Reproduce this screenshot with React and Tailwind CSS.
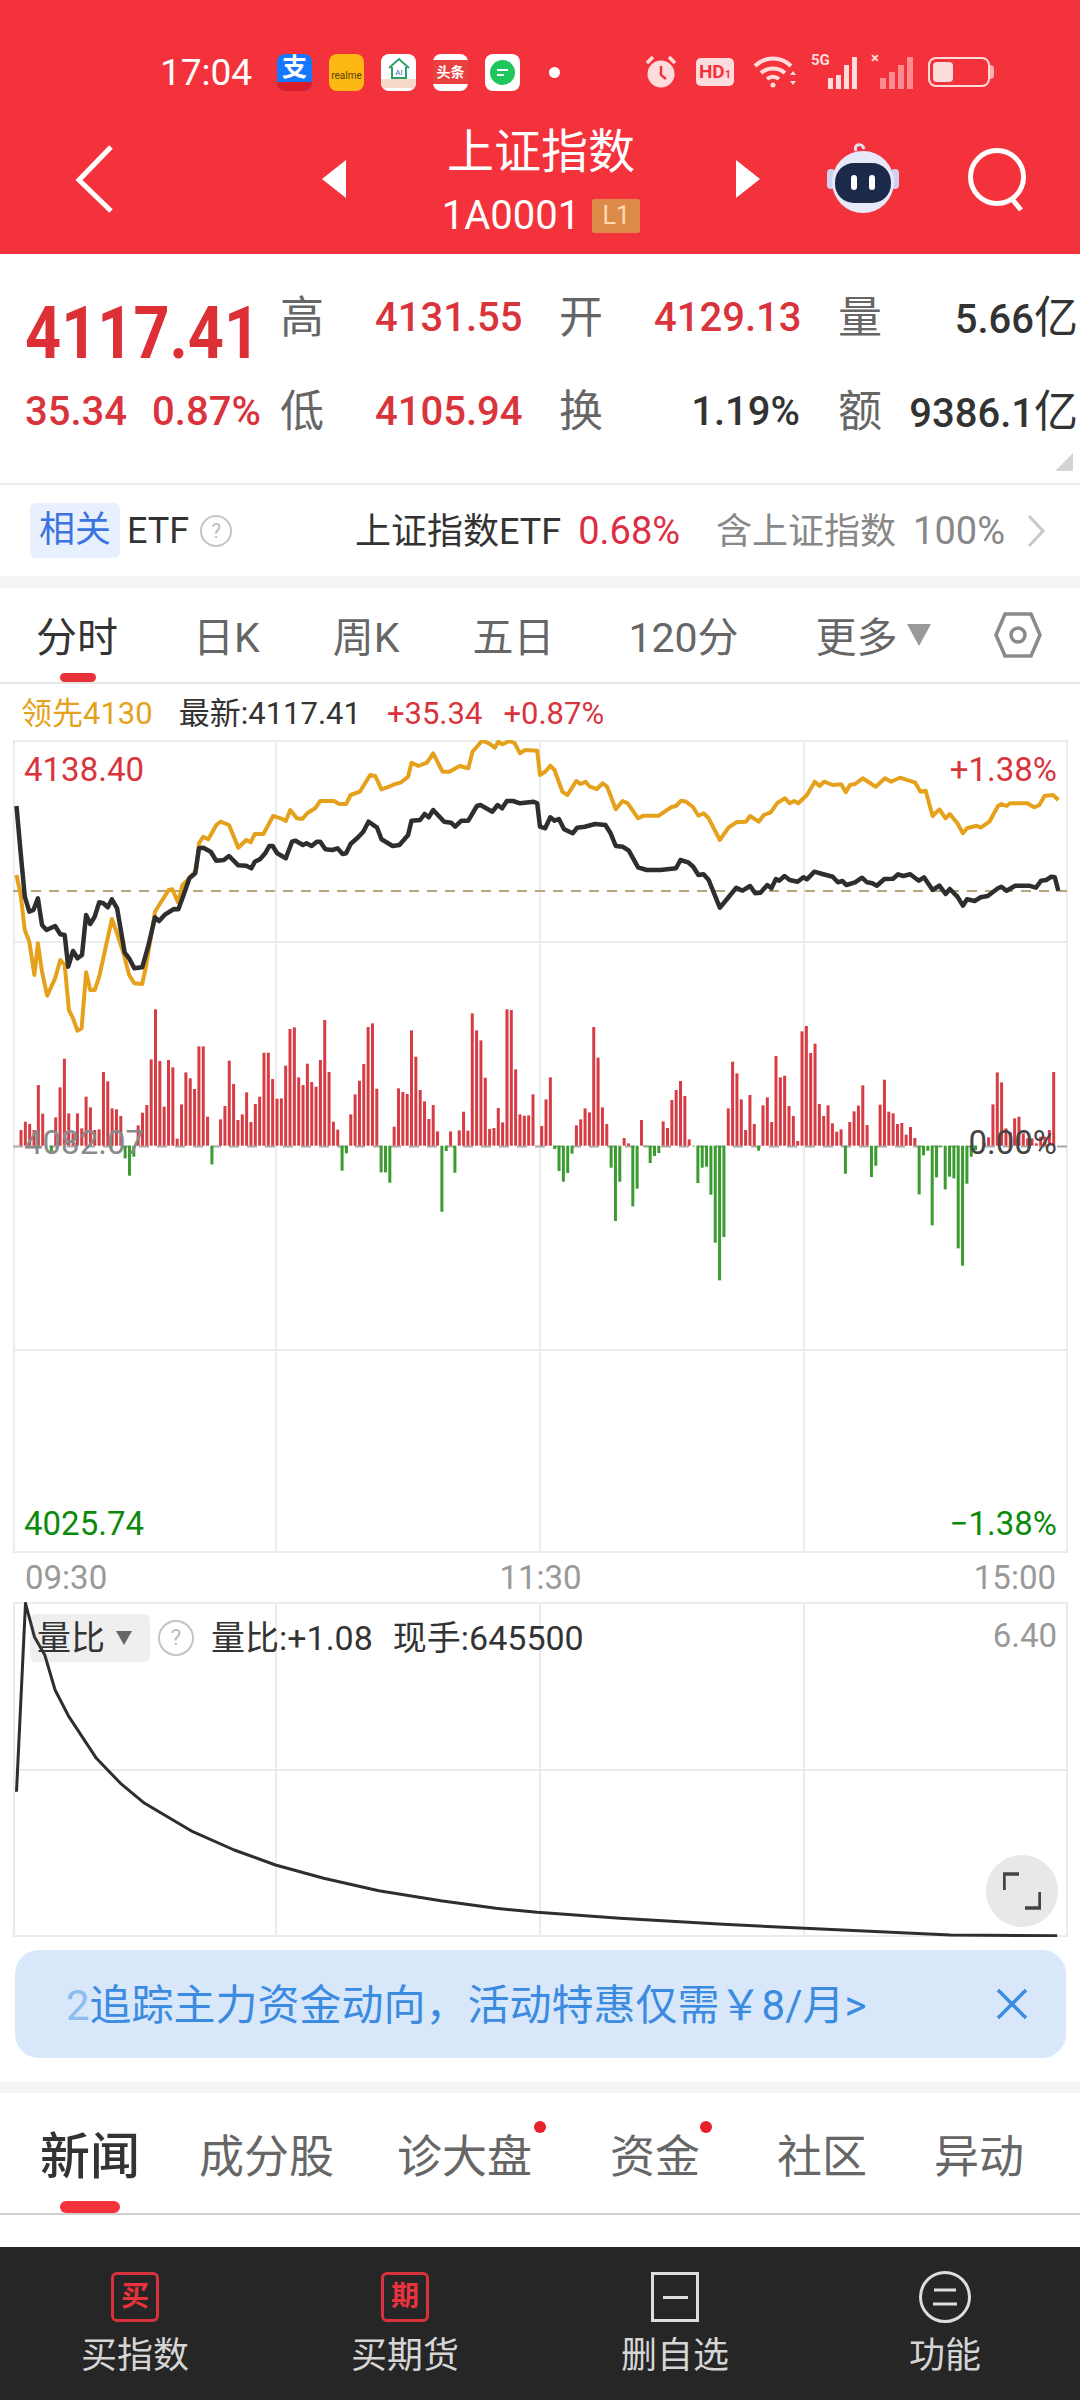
import React from 'react';

const BARS = [
  47,72,65,47,182,96,0,-18,85,175,261,97,37,97,52,147,115,47,49,221,193,112,109,89,-38,-90,-33,61,99,122,259,409,254,117,257,235,21,124,220,202,170,298,298,87,-56,0,79,119,255,185,77,94,160,71,125,147,279,279,200,141,142,
  240,350,355,205,182,246,191,177,257,377,221,72,48,-75,-23,94,154,195,245,356,367,171,-80,-80,-111,57,172,161,155,346,267,167,133,80,122,43,-198,-16,43,-81,46,102,45,397,346,316,204,50,53,113,70,409,407,229,94,90,91,154,0,59,139,205,
  -10,-76,-108,-82,-24,61,79,112,100,356,264,115,65,-66,-226,-108,23,7,-182,-129,77,-2,-52,-31,-22,73,53,137,167,194,149,19,-2,-112,-66,-63,-147,-291,-404,-274,112,252,217,139,47,152,65,-15,121,145,71,269,205,210,119,89,14,343,359,278,306,125,89,
  121,67,42,49,-84,71,103,120,181,62,-94,-60,123,198,102,97,65,68,33,56,23,-146,-29,-15,-239,-95,-4,-131,-93,-98,-308,-360,-114,-33,-13,0,9,25,124,220,190,52,40,82,87,37,22,22,7,27,27,47,221,
];

// traced from the chart, left half then right half
const BLACK_L = [48,258,60,400,72,530,85,575,97,570,110,535,122,615,135,630,160,618,175,643,188,645,198,740,212,693,225,715,238,705,250,585,262,612,275,590,288,547,300,550,313,562,325,538,340,565,362,698,375,715,390,745,413,742,430,680,450,592,462,603,480,583,505,567,518,568,535,520,550,475,567,460,578,385,590,383,612,395,628,422,650,420,665,408,692,436,715,437,730,445,740,425,755,418,770,400,782,378,792,378,805,400,830,415,848,365,858,362,880,375,890,370,905,378,920,365,930,365,945,388,965,390,980,385,995,402,1005,400,1018,372,1040,352,1055,335,1070,305,1095,323,1108,358,1140,378,1160,375,1185,345,1195,302,1220,300,1233,282,1245,292,1258,270,1290,305,1310,308,1322,320,1340,302,1360,302,1385,258,1395,255,1430,275,1445,255,1458,265,1472,243,1490,243,1510,250,1550,245,1560,250];
const BLACK_R = [0,320,15,325,30,292,42,302,55,297,70,328,95,340,108,323,130,320,160,312,190,315,205,340,220,378,240,380,258,392,285,442,310,450,350,450,395,445,408,420,430,427,445,440,460,465,475,463,490,480,522,563,545,535,570,503,588,512,610,498,625,520,640,518,660,495,672,505,685,477,695,482,710,468,725,480,748,485,765,472,775,478,797,455,820,462,850,470,865,487,878,483,890,495,915,487,935,473,950,487,965,490,978,497,1000,477,1025,476,1040,463,1055,468,1075,463,1100,482,1115,472,1140,510,1160,497,1178,522,1190,507,1212,530,1228,557,1240,538,1262,543,1280,532,1300,528,1330,505,1340,500,1355,512,1380,497,1420,497,1440,503,1455,482,1470,480,1485,470,1495,472,1505,512];
const AMBER_L = [48,465,60,525,72,630,85,665,100,765,110,670,122,755,137,827,160,775,175,720,188,735,200,870,212,895,225,932,237,925,250,757,262,810,275,810,288,770,325,597,340,640,360,705,375,765,390,790,413,792,425,735,450,575,462,555,490,510,500,508,517,547,530,495,545,480,570,450,578,370,590,350,605,358,628,315,640,305,665,315,692,383,715,360,728,367,740,342,765,342,793,288,815,295,830,303,843,270,862,295,878,297,892,280,915,265,930,243,970,243,985,252,1005,252,1018,225,1045,215,1075,165,1090,168,1108,208,1130,200,1145,193,1165,187,1185,170,1195,128,1215,138,1240,128,1258,100,1285,155,1305,155,1335,138,1360,145,1372,95,1400,62,1420,70,1437,83,1447,65,1458,73,1480,63,1495,70,1510,100,1525,90,1560,92];
const AMBER_R = [0,165,15,155,30,137,42,150,65,215,80,225,105,183,118,192,132,185,145,200,165,207,182,190,195,200,220,268,240,243,255,250,285,295,300,287,345,287,380,262,395,258,410,242,425,245,445,262,460,287,475,280,490,295,522,360,548,322,570,307,598,305,610,288,635,305,650,285,670,277,690,248,712,235,725,250,738,243,750,250,775,225,798,185,812,198,825,185,850,195,875,193,888,217,900,195,915,192,937,175,975,200,1002,175,1020,185,1045,173,1090,188,1105,215,1120,212,1140,288,1160,268,1178,295,1190,282,1212,310,1228,340,1240,325,1268,317,1280,323,1305,305,1330,258,1340,252,1355,258,1365,250,1415,250,1435,262,1450,255,1465,228,1490,225,1505,240];

const toPoints = (left, right) => {
  const out = [];
  for (let i = 0; i < left.length; i += 2) out.push(`${(left[i] / 2.904).toFixed(1)},${(720 + left[i + 1] / 3).toFixed(1)}`);
  for (let i = 0; i < right.length; i += 2) out.push(`${(540 + right[i] / 2.904).toFixed(1)},${(720 + right[i + 1] / 3).toFixed(1)}`);
  return out.join(' ');
};

const RATIO = [24,755,37,190,50,290,65,345,80,450,100,530,140,655,175,730,210,790,280,875,340,930,400,975,470,1015,550,1052,640,1082,720,1105,780,1117,900,1135,1050,1153,1200,1168,1380,1185,1535,1187];
const ratioPoints = () => {
  const out = [];
  for (let i = 0; i < RATIO.length; i += 2) out.push(`${(RATIO[i] / 1.452).toFixed(1)},${(1540 + RATIO[i + 1] / 3).toFixed(1)}`);
  return out.join(' ');
};

const AppIcon = ({ className, children }) => (
  <div className={`w-[35px] h-[37px] rounded-[8px] overflow-hidden flex flex-col items-center justify-center shrink-0 ${className}`}>{children}</div>
);

const StatusBar = () => (
  <div className="flex items-center h-[40px] mt-[52px] pl-[160px] text-white">
    <span className="text-[37px] leading-none w-[117px]">17:04</span>
    <div className="flex gap-[17px] items-center">
      <AppIcon className="bg-[#1677ff]">
        <span className="text-white text-[25px] leading-[28px] font-bold">支</span>
        <div className="w-full h-[9px] bg-[#d81e2c]" />
      </AppIcon>
      <AppIcon className="bg-[#fdb813]">
        <span className="text-[#5a4300] text-[10px] leading-none mt-[8px]">realme</span>
      </AppIcon>
      <AppIcon className="bg-white">
        <svg width="26" height="22" viewBox="0 0 26 22" fill="none"><path d="M3 11 13 2l10 9M6 10v11h14V10" stroke="#2f9e6e" strokeWidth="2" /><text x="13" y="18" fontSize="8" textAnchor="middle" fill="#2f6fb0">AI</text></svg>
        <div className="w-full h-[9px] bg-[#f7d9c8]" />
      </AppIcon>
      <AppIcon className="bg-white">
        <div className="w-full h-[24px] bg-[#e8403f] text-white text-[14px] leading-[24px] text-center font-bold whitespace-nowrap">头条</div>
      </AppIcon>
      <AppIcon className="bg-white">
        <div className="w-[25px] h-[25px] rounded-full bg-[#1fc65c] flex flex-col items-center justify-center gap-[3px]">
          <div className="w-[11px] h-[2px] bg-white" />
          <div className="w-[7px] h-[2px] bg-white self-center mr-[4px]" />
        </div>
      </AppIcon>
    </div>
    <div className="w-[11px] h-[11px] rounded-full bg-white ml-[29px]" />
    <svg className="ml-[85px]" width="32" height="34" viewBox="0 0 32 34" fill="none">
      <circle cx="16" cy="19" r="13.5" fill="#ffdcdc" />
      <path d="M16 11v9l5 4" stroke="#f4323c" strokeWidth="2.5" />
      <path d="M2 8 8 2M30 8l-6-6" stroke="#ffdcdc" strokeWidth="3.5" />
    </svg>
    <div className="ml-[19px] w-[38px] h-[28px] rounded-[5px] bg-[#ffdcdc] text-[#f4323c] text-[19px] leading-[28px] font-bold text-center">HD<span className="text-[11px]">1</span></div>
    <svg className="ml-[19px]" width="44" height="34" viewBox="0 0 44 34" fill="none" stroke="#ffdcdc" strokeWidth="4">
      <path d="M2 11C12 1 28 1 38 11M8 18c7-6 17-6 24 0M14 24c4-3 8-3 12 0" />
      <circle cx="20" cy="30" r="2.5" fill="#ffdcdc" stroke="none" />
      <path d="M37 20l3-4 3 4zM37 26l3 4 3-4z" fill="#ffdcdc" stroke="none" />
    </svg>
    <div className="relative ml-[14px] w-[46px] h-[34px] flex items-end justify-end gap-[3px]">
      <span className="absolute left-0 top-[-2px] text-[#ffdcdc] text-[15px] leading-none font-bold">5G</span>
      <div className="w-[5px] h-[11px] bg-[#ffdcdc]" />
      <div className="w-[5px] h-[14px] bg-[#ffdcdc]" />
      <div className="w-[5px] h-[24px] bg-[#ffdcdc]" />
      <div className="w-[5px] h-[32px] bg-[#ffdcdc]" />
    </div>
    <div className="relative ml-[12px] w-[44px] h-[34px] flex items-end justify-end gap-[3px]">
      <span className="absolute left-[2px] top-[-4px] text-[#ffdcdc] text-[15px] leading-none font-bold">×</span>
      <div className="w-[6px] h-[11px] bg-[#ff8d90]" />
      <div className="w-[6px] h-[17px] bg-[#ff8d90]" />
      <div className="w-[6px] h-[24px] bg-[#ff8d90]" />
      <div className="w-[6px] h-[32px] bg-[#ff8d90]" />
    </div>
    <div className="ml-[15px] w-[62px] h-[30px] rounded-[8px] border-2 border-[#ffdcdc] p-[3px]">
      <div className="w-[20px] h-full rounded-[4px] bg-[#ffdcdc]" />
    </div>
    <div className="w-[4px] h-[14px] bg-[#ffb0b0] rounded-r" />
  </div>
);

const NavBar = () => (
  <div className="flex items-center h-[124px] mt-[30px] text-white">
    <svg className="ml-[75px] mb-[10px]" width="40" height="70" viewBox="0 0 40 70" fill="none">
      <path d="M36 3 4 36l32 31" stroke="white" strokeWidth="5" />
    </svg>
    <svg className="ml-[207px] mb-[10px]" width="24" height="38" viewBox="0 0 24 38"><path d="M24 0v38L0 19z" fill="white" /></svg>
    <div className="w-[390px] flex flex-col items-center mt-[-13px]">
      <span className="text-[47px] leading-[58px]">上证指数</span>
      <div className="flex items-center mt-[18px] h-[34px]">
        <span className="text-[40px] leading-none">1A0001</span>
        <span className="ml-[12px] w-[48px] h-[34px] rounded-[2px] bg-[#dd8a49] text-[#ffd9b0] text-[25px] leading-[34px] text-center">L1</span>
      </div>
    </div>
    <svg className="mb-[10px]" width="24" height="38" viewBox="0 0 24 38"><path d="M0 0v38l24-19z" fill="white" /></svg>
    <svg className="ml-[66px] mb-[10px]" width="74" height="72" viewBox="0 0 74 72" fill="none">
      <path d="M30 8c-3-7 6-9 8-2" stroke="#dfe3f5" strokeWidth="3" />
      <rect x="1" y="26" width="8" height="20" rx="4" fill="#cfd3f0" />
      <rect x="65" y="26" width="8" height="20" rx="4" fill="#cfd3f0" />
      <ellipse cx="37" cy="39" rx="31" ry="31" fill="#e7e9fb" />
      <rect x="9" y="20" width="56" height="40" rx="19" fill="#1c2a4a" />
      <rect x="25" y="32" width="6" height="15" rx="3" fill="white" />
      <rect x="43" y="32" width="6" height="15" rx="3" fill="white" />
    </svg>
    <svg className="ml-[67px] mb-[10px]" width="62" height="64" viewBox="0 0 62 64" fill="none" stroke="white" strokeWidth="5">
      <circle cx="30" cy="30" r="26.5" />
      <path d="M45 52l9 11" />
    </svg>
  </div>
);

const QuoteRow = ({ left, l1, v1, l2, v2, v2Class, l3, v3 }) => (
  <div className="flex items-center h-[94px]">
    <div className="w-[280px] pl-[25px] shrink-0">{left}</div>
    <span className="w-[95px] text-[44px] text-[#666] leading-none shrink-0">{l1}</span>
    <span className="w-[146px] text-right text-[40px] font-medium text-[#d9343c] leading-none shrink-0">{v1}</span>
    <span className="w-[95px] ml-[38px] text-[44px] text-[#666] leading-none shrink-0">{l2}</span>
    <span className={`w-[146px] text-right text-[40px] font-medium leading-none shrink-0 ${v2Class}`}>{v2}</span>
    <span className="ml-[38px] w-[50px] text-[44px] text-[#666] leading-none shrink-0">{l3}</span>
    <span className="flex-1 text-right text-[40px] font-medium text-[#333] leading-none pr-[2px] whitespace-nowrap">{v3}<span className="text-[44px] font-normal">亿</span></span>
  </div>
);

const Quote = () => (
  <section className="relative h-[231px] pt-[17px] border-b-2 border-[#ebebeb]">
    <QuoteRow
      left={<span className="block text-[63px] font-bold text-[#dc2f36] leading-none scale-y-[1.14] origin-center mt-[30px] whitespace-nowrap">4117.41</span>}
      l1="高" v1="4131.55" l2="开" v2="4129.13" v2Class="text-[#d9343c]" l3="量" v3="5.66"
    />
    <QuoteRow
      left={<div className="flex gap-[25px] text-[40px] font-medium text-[#d9343c] leading-none"><span>35.34</span><span>0.87%</span></div>}
      l1="低" v1="4105.94" l2="换" v2="1.19%" v2Class="text-[#333]" l3="额" v3="9386.1"
    />
    <svg className="absolute right-[7px] top-[199px]" width="18" height="18" viewBox="0 0 18 18"><path d="M18 0v18H0z" fill="#d4d4d4" /></svg>
  </section>
);

const QuestionMark = ({ size, className }) => (
  <span
    className={`inline-block rounded-full border-2 border-[#c4c4c4] text-[#bbb] text-center shrink-0 ${className}`}
    style={{ width: size, height: size }}
  >?</span>
);

const EtfRow = () => (
  <section className="flex items-center h-[91px] pl-[30px] pr-[34px]">
    <span className="w-[90px] h-[55px] rounded-[6px] bg-[#e8f0fd] text-[#3b73e0] text-[36px] leading-[55px] text-center">相关</span>
    <span className="ml-[7px] text-[36px] leading-none text-[#333]">ETF</span>
    <QuestionMark size={32} className="ml-[11px] text-[20px] leading-[28px]" />
    <span className="ml-auto text-[36px] leading-none text-[#333] pt-[2px]">上证指数ETF</span>
    <span className="ml-[17px] text-[38px] leading-none text-[#dc2f45]">0.68%</span>
    <span className="ml-[36px] text-[36px] leading-none text-[#888] pt-[2px]">含上证指数</span>
    <span className="ml-[17px] text-[38px] leading-none text-[#888]">100%</span>
    <svg className="ml-[21px]" width="20" height="34" viewBox="0 0 20 34" fill="none"><path d="M3 2l14 15L3 32" stroke="#c8c8c8" strokeWidth="3" /></svg>
  </section>
);

const PeriodTabs = () => (
  <section className="relative flex items-center h-[96px] pt-[7px] border-b-2 border-[#e6e6e6] text-[41px] text-[#666] leading-none">
    <span className="ml-[36px] text-[#333]">分时</span>
    <span className="ml-[75px]">日K</span>
    <span className="ml-[73px]">周K</span>
    <span className="ml-[73px]">五日</span>
    <span className="ml-[74px]">120分</span>
    <span className="ml-[77px]">更多</span>
    <svg className="ml-[9px] mb-[7px]" width="24" height="22" viewBox="0 0 24 22"><path d="M0 0h24L12 22z" fill="#999" /></svg>
    <svg className="ml-[63px] mb-[7px]" width="48" height="46" viewBox="0 0 48 46" fill="none" stroke="#8a8a8a" strokeWidth="3.5">
      <path d="M11 2h26l9 21-9 21H11L2 23z" />
      <circle cx="24" cy="23" r="7" />
    </svg>
    <div className="absolute left-[60px] bottom-0 w-[36px] h-[9px] rounded-full bg-[#e8323a]" />
  </section>
);

const Legend = () => (
  <div className="flex items-center h-[56px] pl-[21px] pt-[2px] text-[31px] leading-none">
    <span className="text-[#e5a11b]">领先4130</span>
    <span className="ml-[26px] text-[#333]">最新:4117.41</span>
    <span className="ml-[26px] text-[#d9343c]">+35.34</span>
    <span className="ml-[21px] text-[#d9343c]">+0.87%</span>
  </div>
);

const PriceChart = () => (
  <div className="relative ml-[13px] w-[1055px] h-[813px] text-[33px] leading-none">
    <svg className="block" width="1055" height="813" viewBox="13 740 1055 813" fill="none">
      <rect x="14" y="741" width="1053" height="811" stroke="#ececec" strokeWidth="2" />
      <path d="M276 740v813M540 740v813M804 740v813M13 942h1055M13 1350h1055" stroke="#ececec" strokeWidth="2" />
      <path d="M13 891h1055" stroke="#b8a57e" strokeWidth="2" strokeDasharray="10 8" />
      <path d="M13 1146.500h1055" stroke="#aaa" strokeWidth="2" strokeDasharray="10 8" />
      {BARS.map((h, i) =>
        h === 0 ? null : (
          <rect
            key={i}
            x={19.5 + i * 4.339}
            y={h > 0 ? 1145.7 - h / 3 : 1145.7}
            width="3"
            height={Math.abs(h) / 3}
            fill={h > 0 ? '#d73c44' : '#3a9c2e'}
          />
        )
      )}
      <polyline points={toPoints(AMBER_L, AMBER_R)} stroke="#e5a11b" strokeWidth="4" strokeLinejoin="round" />
      <polyline points={toPoints(BLACK_L, BLACK_R)} stroke="#2e2e2e" strokeWidth="4.5" strokeLinejoin="round" />
    </svg>
    <span className="absolute left-[11px] top-[13px] text-[#d9343c]">4138.40</span>
    <span className="absolute right-[11px] top-[13px] text-[#d9343c]">+1.38%</span>
    <span className="absolute left-[11px] top-[386px] text-[#8a8a8a]">4082.07</span>
    <span className="absolute right-[11px] top-[386px] text-[#444]">0.00%</span>
    <span className="absolute left-[11px] top-[767px] text-[#0c8a0c]">4025.74</span>
    <span className="absolute right-[11px] top-[767px] text-[#0c8a0c]">−1.38%</span>
  </div>
);

const TimeAxis = () => (
  <div className="flex justify-between items-center h-[49px] pl-[25px] pr-[24px] text-[33px] leading-none text-[#999]">
    <span>09:30</span>
    <span>11:30</span>
    <span>15:00</span>
  </div>
);

const RatioChart = () => (
  <div className="relative ml-[13px] w-[1055px] h-[335px]">
    <svg className="block" width="1055" height="335" viewBox="13 1602 1055 335" fill="none">
      <rect x="14" y="1603" width="1053" height="333" stroke="#ebebeb" strokeWidth="2" />
      <path d="M276 1602v335M540 1602v335M804 1602v335M13 1770h1055" stroke="#ebebeb" strokeWidth="2" />
      <polyline points={ratioPoints()} stroke="#2e2e2e" strokeWidth="3" strokeLinejoin="round" />
    </svg>
    <div className="absolute left-[17px] top-[12px] flex items-center text-[34px] leading-none text-[#333]">
      <div className="flex items-center w-[120px] h-[48px] rounded-[6px] bg-[#666]/10 pl-[7px]">
        <span>量比</span>
        <svg className="ml-[11px]" width="16" height="14" viewBox="0 0 16 14"><path d="M0 0h16L8 14z" fill="#666" /></svg>
      </div>
      <QuestionMark size={36} className="ml-[8px] text-[22px] leading-[32px]" />
      <span className="ml-[17px]">量比:+1.08</span>
      <span className="ml-[20px]">现手:645500</span>
    </div>
    <span className="absolute right-[11px] top-[17px] text-[33px] leading-none text-[#999]">6.40</span>
    <div className="absolute left-[973px] top-[253px] w-[72px] h-[72px] rounded-full bg-[#e8e8e8] flex items-center justify-center">
      <svg width="38" height="38" viewBox="0 0 38 38" fill="none" stroke="#444" strokeWidth="3.5">
        <path d="M1 18V2h15M37 20v16H22" />
      </svg>
    </div>
  </div>
);

const Banner = () => (
  <div className="flex items-center justify-between h-[108px] mx-[15px] mt-[13px] w-[1051px] rounded-[24px] bg-[#d8e7fa] pl-[51px] pr-[38px]">
    <span className="text-[42px] leading-none text-[#3b8be0] whitespace-nowrap pt-[4px]">
      <span className="text-[#8cbcf0]">2</span>追踪主力资金动向，活动特惠仅需￥8/月&gt;
    </span>
    <svg width="32" height="32" viewBox="0 0 32 32" fill="none" stroke="#3b8be0" strokeWidth="3.5"><path d="M2 2l28 28M30 2 2 30" /></svg>
  </div>
);

const NewsTabs = () => (
  <section className="relative flex items-center h-[122px] pt-[8px] border-b-2 border-[#cfcfcf] text-[45px] leading-none text-[#666]">
    <span className="ml-[40px] text-[50px] font-medium text-[#333]">新闻</span>
    <span className="ml-[59px]">成分股</span>
    <span className="relative ml-[63px]">诊大盘<i className="absolute right-[-14px] top-[-14px] w-[12px] h-[12px] rounded-full bg-[#e8202a]" /></span>
    <span className="relative ml-[78px]">资金<i className="absolute right-[-12px] top-[-14px] w-[12px] h-[12px] rounded-full bg-[#e8202a]" /></span>
    <span className="ml-[77px]">社区</span>
    <span className="ml-[67px]">异动</span>
    <div className="absolute left-[60px] bottom-0 w-[60px] h-[12px] rounded-full bg-[#f4323c]" />
  </section>
);

const BottomItem = ({ icon, label }) => (
  <div className="flex-1 flex flex-col items-center">
    <div className="h-[50px] flex items-center justify-center">{icon}</div>
    <span className="mt-[16px] text-[36px] leading-none text-[#d5d5d5]">{label}</span>
  </div>
);

const BottomBar = () => (
  <nav className="flex h-[153px] mt-[32px] pt-[25px] bg-[#262626]">
    <BottomItem
      label="买指数"
      icon={<div className="w-[48px] h-[50px] rounded-[6px] border-[3px] border-[#d8323c] text-[#e8323c] text-[28px] leading-[44px] font-bold text-center">买</div>}
    />
    <BottomItem
      label="买期货"
      icon={<div className="w-[48px] h-[50px] rounded-[6px] border-[3px] border-[#d8323c] text-[#e8323c] text-[28px] leading-[44px] font-bold text-center">期</div>}
    />
    <BottomItem
      label="删自选"
      icon={<div className="w-[48px] h-[50px] border-[3px] border-[#ddd] flex items-center justify-center"><div className="w-[25px] h-[3px] bg-[#ddd]" /></div>}
    />
    <BottomItem
      label="功能"
      icon={
        <svg width="52" height="52" viewBox="0 0 52 52" fill="none" stroke="#ddd" strokeWidth="3">
          <circle cx="26" cy="26" r="24.5" />
          <path d="M15 19h22M14 33h24" />
        </svg>
      }
    />
  </nav>
);

const App = () => (
  <div className="w-[1080px] h-[2400px] overflow-hidden bg-white font-[Roboto,'Noto_Sans_CJK_SC',sans-serif]">
    <header className="h-[254px] bg-[#f4323c] overflow-hidden">
      <StatusBar />
      <NavBar />
    </header>
    <Quote />
    <EtfRow />
    <div className="h-[12px] bg-[#f5f5f5]" />
    <PeriodTabs />
    <Legend />
    <PriceChart />
    <TimeAxis />
    <RatioChart />
    <Banner />
    <div className="h-[11px] mt-[24px] bg-[#f5f5f5]" />
    <NewsTabs />
    <BottomBar />
  </div>
);

export default App;
